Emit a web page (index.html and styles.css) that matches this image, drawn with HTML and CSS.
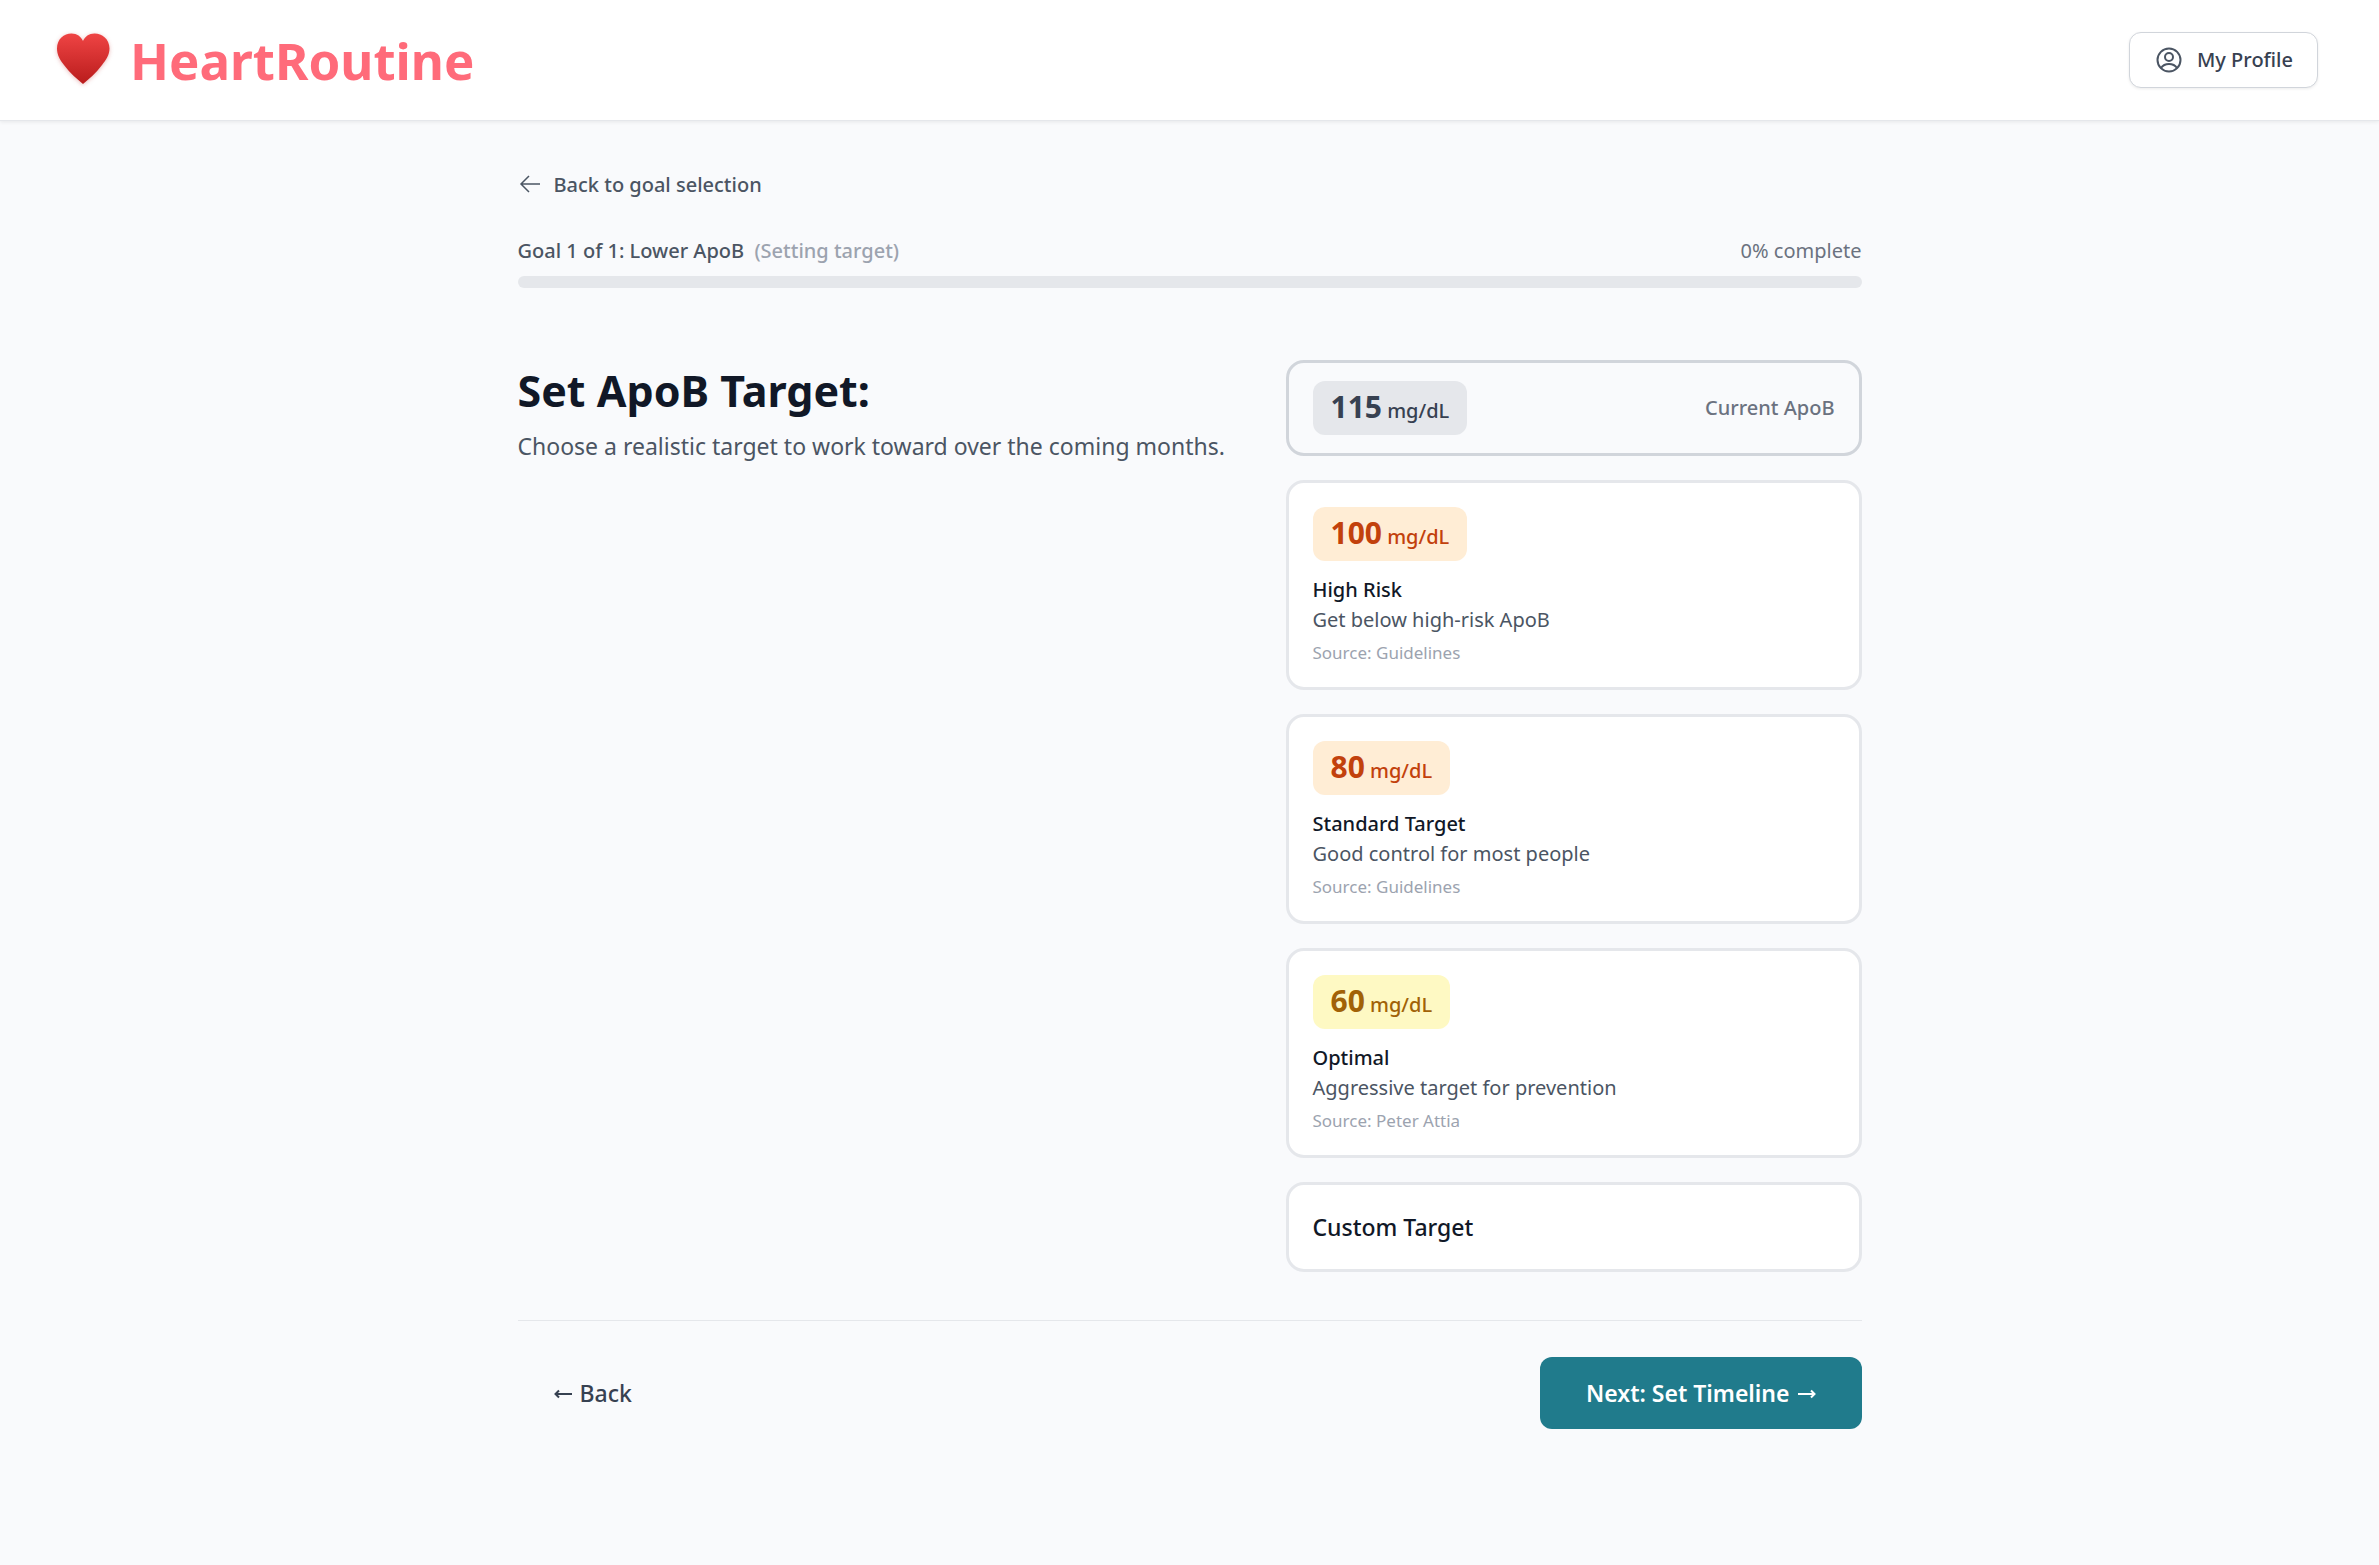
FILE: index.html
```html
<!DOCTYPE html>
<html lang="en">
<head>
    <meta charset="UTF-8">
    <meta name="viewport" content="width=device-width, initial-scale=1.0">
    <title>HeartRoutine - Set ApoB Target</title>
    <link rel="stylesheet" href="styles.css">
</head>
<body>
    <header class="header">
        <a class="logo" href="#">
            <svg class="logo-icon" viewBox="0 0 54 52" aria-hidden="true">
                <defs>
                    <linearGradient id="heartFill" x1="0" y1="0" x2="0" y2="1">
                        <stop offset="0" stop-color="#ef4444"/>
                        <stop offset="1" stop-color="#b91c1c"/>
                    </linearGradient>
                </defs>
                <path fill="url(#heartFill)" d="M27 50C21 45 14 39 8 31C4 26 1 21 1 14.500C1 5 8 -.500 15.500 -.500C21 -.500 25 2.500 27 7C29 2.500 33 -.500 38.500 -.500C46 -.500 53.500 5 53.500 14.500C53.500 21 50 26 46 31C40 39 33 45 27 50Z"/>
            </svg>
            <span class="logo-text">HeartRoutine</span>
        </a>
        <button class="profile-btn" type="button">
            <svg class="profile-icon" viewBox="0 0 26 26" aria-hidden="true">
                <circle cx="13" cy="13" r="11.500"/>
                <circle cx="13" cy="10" r="4"/>
                <path d="M5 21C7 18 10 17 13 17C16 17 19 18 21 21"/>
            </svg>
            My Profile
        </button>
    </header>

    <main class="container">
        <a class="back-link" href="#">
            <svg class="back-icon" viewBox="0 0 24 24" aria-hidden="true">
                <path d="M22 11H3M11 3L3 11L11 19"/>
            </svg>
            Back to goal selection
        </a>

        <div class="progress-header">
            <div class="progress-title">Goal 1 of 1: Lower ApoB <span class="progress-step">(Setting target)</span></div>
            <div class="progress-value">0% complete</div>
        </div>
        <div class="progress-bar" role="progressbar" aria-label="Goal progress" aria-valuenow="0" aria-valuemin="0" aria-valuemax="100">
            <div class="progress-fill" style="width: 0%"></div>
        </div>

        <div class="target-layout">
            <section class="intro">
                <h1>Set ApoB Target:</h1>
                <p>Choose a realistic target to work toward over the coming months.</p>
            </section>

            <section class="targets">
                <div class="current-card">
                    <span class="badge badge-gray"><strong>115</strong> mg/dL</span>
                    <span class="current-label">Current ApoB</span>
                </div>
                <button class="target-card" type="button">
                    <span class="badge badge-orange"><strong>100</strong> mg/dL</span>
                    <span class="target-name">High Risk</span>
                    <span class="target-desc">Get below high-risk ApoB</span>
                    <span class="target-source">Source: Guidelines</span>
                </button>
                <button class="target-card" type="button">
                    <span class="badge badge-orange"><strong>80</strong> mg/dL</span>
                    <span class="target-name">Standard Target</span>
                    <span class="target-desc">Good control for most people</span>
                    <span class="target-source">Source: Guidelines</span>
                </button>
                <button class="target-card" type="button">
                    <span class="badge badge-yellow"><strong>60</strong> mg/dL</span>
                    <span class="target-name">Optimal</span>
                    <span class="target-desc">Aggressive target for prevention</span>
                    <span class="target-source">Source: Peter Attia</span>
                </button>
                <button class="target-card custom-card" type="button">Custom Target</button>
            </section>
        </div>

        <div class="actions">
            <button class="btn btn-back" type="button">
                <svg class="btn-arrow" viewBox="0 0 18 12" aria-hidden="true">
                    <path d="M18 7H2M5 3.500L1.500 7L5 10.500"/>
                </svg>
                Back
            </button>
            <button class="btn btn-next" type="button">
                Next: Set Timeline
                <svg class="btn-arrow" viewBox="0 0 18 12" aria-hidden="true">
                    <path d="M0 7H16M13 3.500L16.500 7L13 10.500"/>
                </svg>
            </button>
        </div>
    </main>
</body>
</html>
```
FILE: styles.css
```css
* {
    box-sizing: border-box;
}
body {
    font-family: 'Segoe UI', 'Noto Sans', sans-serif;
    font-size: 20px;
    line-height: 30px;
    margin: 0;
    min-height: 100vh;
    background-color: #f9fafc;
    color: #111827;
}
button {
    font: inherit;
    color: inherit;
    cursor: pointer;
}
svg {
    flex: none;
}

/* Header */
.header {
    display: flex;
    justify-content: space-between;
    align-items: center;
    padding: 24px 61px 24px 56px;
    background: white;
    border-bottom: 1px solid #e5e7eb;
    box-shadow: 0 1px 4px rgba(0,0,0,0.08);
}
.logo {
    display: flex;
    align-items: center;
    gap: 20px;
    text-decoration: none;
}
.logo-icon {
    width: 54px;
    height: 52px;
    overflow: visible;
    filter: drop-shadow(0 1px 2px rgba(185,28,28,0.3));
}
.logo-text {
    font-size: 51px;
    line-height: 72px;
    font-weight: 700;
    color: #ff6b7a;
}
.profile-btn {
    display: flex;
    align-items: center;
    gap: 15px;
    padding: 12px 24px 12px 26px;
    font-weight: 500;
    color: #374151;
    background: white;
    border: 1px solid #d1d5db;
    border-radius: 12px;
    box-shadow: 0 1px 3px rgba(0,0,0,0.08);
}
.profile-icon {
    width: 26px;
    height: 26px;
    fill: none;
    stroke: #4b5563;
    stroke-width: 2;
}

/* Progress */
.container {
    max-width: 1344px;
    margin: 0 auto;
    padding: 49px 0;
}
.back-link {
    display: flex;
    align-items: center;
    gap: 12px;
    width: fit-content;
    font-weight: 500;
    color: #4b5563;
    text-decoration: none;
}
.back-icon {
    width: 24px;
    height: 24px;
    fill: none;
    stroke: #4b5563;
    stroke-width: 1.5;
}
.progress-header {
    display: flex;
    justify-content: space-between;
    margin: 36px 0 10px;
}
.progress-title {
    font-weight: 500;
    color: #4b5563;
}
.progress-step {
    margin-left: 5px;
    color: #9ca3af;
}
.progress-value {
    color: #6b7280;
}
.progress-bar {
    height: 12px;
    background: #e5e7eb;
    border-radius: 6px;
    overflow: hidden;
}
.progress-fill {
    height: 100%;
    background: #207b8c;
}

/* Target selection */
.target-layout {
    display: grid;
    grid-template-columns: 5fr 4fr;
    gap: 48px;
    margin-top: 72px;
}
.intro h1 {
    margin: 4px 0 10px;
    font-size: 43px;
    line-height: 54px;
    font-weight: 700;
}
.intro p {
    margin: 0;
    font-size: 23px;
    line-height: 36px;
    color: #4b5563;
}
.targets {
    display: flex;
    flex-direction: column;
    gap: 24px;
}
.current-card {
    display: flex;
    justify-content: space-between;
    align-items: center;
    padding: 18px 24px;
    border: 3px solid #d1d5db;
    border-radius: 18px;
}
.current-label {
    font-weight: 500;
    color: #6b7280;
}
.target-card {
    display: flex;
    flex-direction: column;
    align-items: flex-start;
    padding: 24px 24px 20px;
    text-align: left;
    background: white;
    border: 3px solid #e5e7eb;
    border-radius: 18px;
}
.badge {
    padding: 11px 18px 6px;
    line-height: 36px;
    font-weight: 500;
    border-radius: 12px;
}
.badge strong {
    font-size: 30px;
    line-height: 30px;
    font-weight: 700;
}
.badge-gray {
    background: #e5e7eb;
    color: #374151;
}
.badge-orange {
    background: #ffedd5;
    color: #c2410c;
}
.badge-yellow {
    background: #fef9c3;
    color: #a16207;
}
.target-name {
    margin-top: 14px;
    font-weight: 500;
}
.target-desc {
    color: #4b5563;
}
.target-source {
    margin-top: 4px;
    font-size: 17px;
    line-height: 28px;
    color: #9ca3af;
}
.custom-card {
    padding: 24px;
    font-size: 23px;
    line-height: 36px;
    font-weight: 500;
}

/* Footer buttons */
.actions {
    display: flex;
    justify-content: space-between;
    margin-top: 48px;
    padding-top: 36px;
    border-top: 1px solid #e5e7eb;
}
.btn {
    display: flex;
    align-items: center;
    gap: 8px;
    font-size: 23px;
    line-height: 36px;
    border: none;
    border-radius: 12px;
}
.btn-back {
    padding: 18px 36px;
    font-weight: 500;
    color: #374151;
    background: none;
}
.btn-next {
    padding: 18px 46px;
    font-weight: 600;
    color: white;
    background: #207b8c;
}
.btn-arrow {
    width: 18px;
    height: 12px;
    fill: none;
    stroke: currentColor;
    stroke-width: 2;
}
```
